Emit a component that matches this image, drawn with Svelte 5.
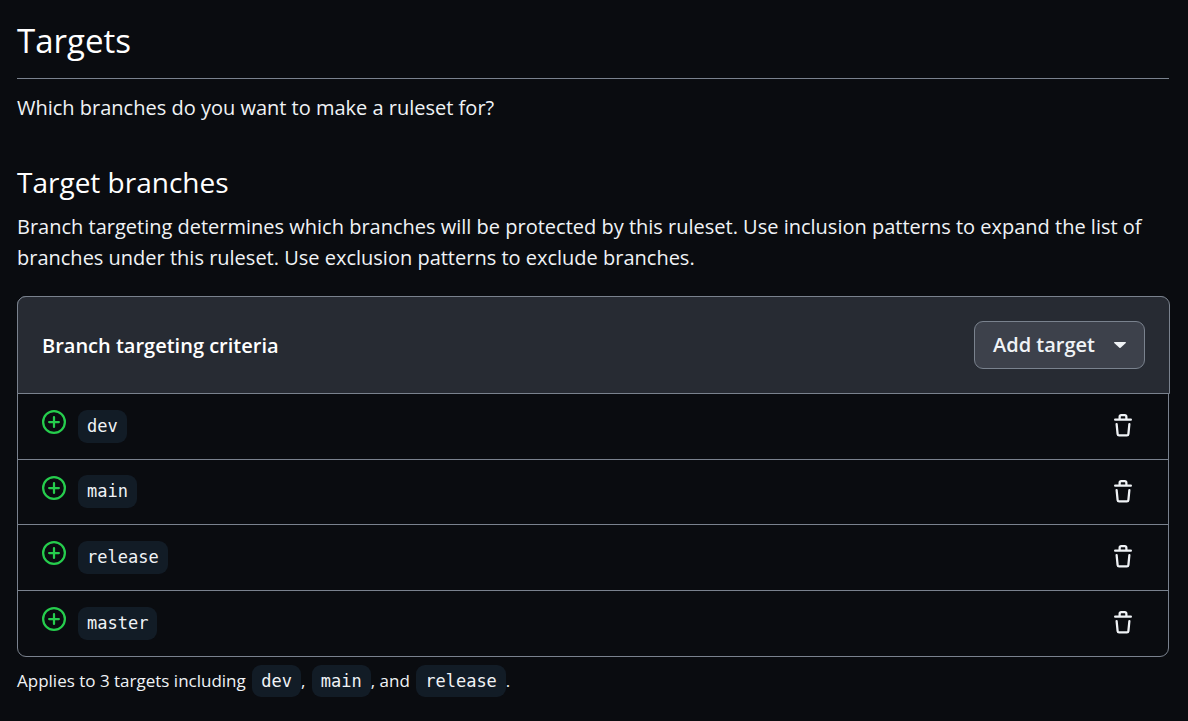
<script>
  const targets = ['dev', 'main', 'release', 'master'];
</script>

<main>
  <h1>Targets</h1>
  <p class="question">Which branches do you want to make a ruleset for?</p>

  <section>
    <h2>Target branches</h2>
    <p class="description">
      Branch targeting determines which branches will be protected by this ruleset. Use inclusion
      patterns to expand the list of branches under this ruleset. Use exclusion patterns to exclude
      branches.
    </p>

    <div class="box">
      <header>
        <h3>Branch targeting criteria</h3>
        <button class="add" type="button" aria-haspopup="menu">
          Add target
          <svg class="caret" viewBox="0 0 12 6" aria-hidden="true"><path d="M.6 0h10.8c.5 0 .7.6.4.9L6.6 5.7a.9.9 0 0 1-1.2 0L.2.9C-.1.6.1 0 .6 0Z" /></svg>
        </button>
      </header>
      <ul>
        {#each targets as target}
          <li>
            <svg class="plus" viewBox="0 0 16 16" aria-hidden="true"><path d="M8 0a8 8 0 1 1 0 16A8 8 0 0 1 8 0ZM1.5 8a6.500 6.500 0 1 0 13 0 6.500 6.500 0 0 0-13 0Zm7.250-3.250v2.500h2.500a.75.75 0 0 1 0 1.500h-2.500v2.500a.75.75 0 0 1-1.500 0v-2.500h-2.500a.75.75 0 0 1 0-1.500h2.500v-2.500a.75.75 0 0 1 1.500 0Z" /></svg>
            <code>{target}</code>
            <button class="delete" type="button" aria-label="Delete {target}">
              <svg viewBox="0 0 16 16" aria-hidden="true"><path d="M11 1.750V3h2.250a.75.75 0 0 1 0 1.500H2.750a.75.75 0 0 1 0-1.500H5V1.750C5 .784 5.784 0 6.750 0h2.500C10.216 0 11 .784 11 1.750ZM4.496 6.675l.66 6.600a.25.25 0 0 0 .249.225h5.190a.25.25 0 0 0 .249-.225l.66-6.600a.75.75 0 0 1 1.492.149l-.66 6.600A1.748 1.748 0 0 1 10.595 15h-5.190a1.750 1.750 0 0 1-1.741-1.575l-.66-6.600a.75.75 0 1 1 1.492-.15ZM6.500 1.750V3h3V1.750a.25.25 0 0 0-.25-.25h-2.500a.25.25 0 0 0-.25.25Z" /></svg>
            </button>
          </li>
        {/each}
      </ul>
    </div>
    <p class="summary">
      Applies to 3 targets including <code>dev</code>, <code>main</code>, and <code>release</code>.
    </p>
  </section>
</main>

<style>
  :global(body) {
    margin: 0;
    background: #0a0c10;
  }
  main {
    padding: 17px 19px 16px 17px;
    color: #f0f3f6;
    font: 20px/31px "Segoe UI", "Open Sans", "Noto Sans", sans-serif;
  }
  h1, h2, h3, p, ul {
    margin: 0;
    padding: 0;
  }
  h1 {
    padding-bottom: 13px;
    border-bottom: 1px solid #7a828e;
    color: #fff;
    font-size: 33px;
    font-weight: 400;
    line-height: 48px;
  }
  .question {
    padding-top: 13px;
  }
  section {
    padding-top: 39px;
  }
  h2 {
    color: #fff;
    font-size: 28px;
    font-weight: 400;
    line-height: 40px;
  }
  .description {
    padding: 9px 0 23px;
  }
  .box {
    border: 1px solid #7a828e;
    border-radius: 9px;
  }
  header {
    display: flex;
    align-items: center;
    justify-content: space-between;
    margin: -1px -2px 0 -1px;
    padding: 24px;
    border: 1px solid #7a828e;
    border-radius: 9px 9px 0 0;
    background: #272b33;
  }
  h3 {
    color: #fff;
    font-size: 20px;
    font-weight: 600;
  }
  button {
    color: #f0f3f6;
    font-family: inherit;
    cursor: pointer;
  }
  .add {
    display: flex;
    align-items: center;
    gap: 19px;
    padding: 8px 18px;
    border: 1px solid #7a828e;
    border-radius: 9px;
    background: #3d414b;
    font-size: 20px;
    font-weight: 600;
    line-height: 30px;
  }
  .caret {
    width: 12px;
    height: 6px;
  }
  svg {
    display: block;
    fill: currentColor;
  }
  ul {
    display: grid;
    grid-auto-rows: 1fr;
    min-height: 262px;
    list-style: none;
  }
  li {
    display: flex;
    align-items: center;
    padding: 0 24px;
    border-bottom: 1px solid #7a828e;
  }
  li:last-child {
    border-bottom: 0;
  }
  .plus {
    width: 24px;
    height: 24px;
    margin: 0 12px 8px 0;
    color: #26cd4d;
  }
  code {
    padding: 6px 9px;
    border-radius: 9px;
    background: #121c26;
    font: 17px/21px Consolas, "DejaVu Sans Mono", monospace;
  }
  .delete {
    margin-left: auto;
    padding: 9px;
    border: 0;
    background: none;
  }
  .delete svg {
    width: 24px;
    height: 24px;
  }
  .summary {
    padding-top: 8px;
    font-size: 17px;
  }
  .summary code {
    margin-left: 2px;
  }
</style>
